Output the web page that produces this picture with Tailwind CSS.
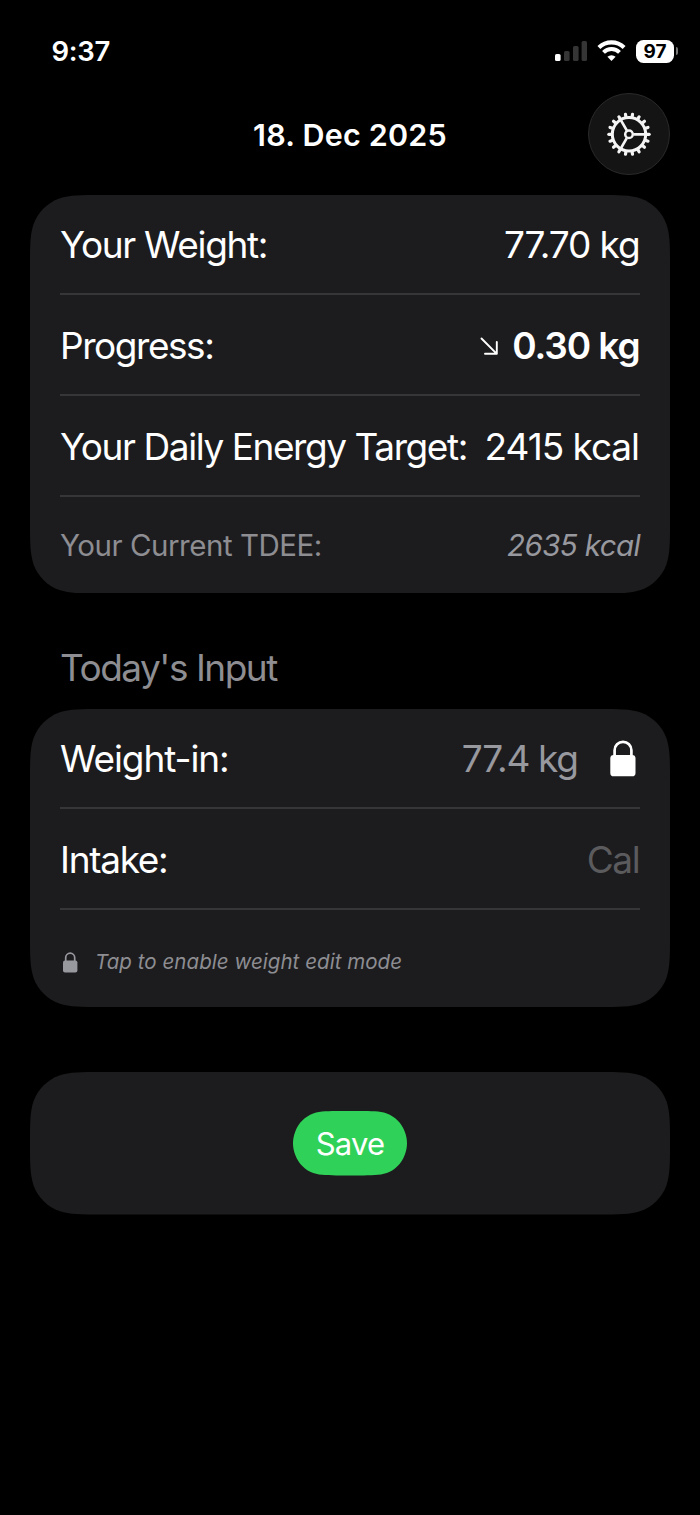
<!DOCTYPE html>
<html lang="en">
<head>
<meta charset="utf-8">
<title>Daily Weight</title>
<script src="https://cdn.jsdelivr.net/npm/@tailwindcss/browser@4"></script>
</head>
<body class="bg-black">
<main class="w-[700px] h-[1515px] bg-black text-white font-['Inter',sans-serif] overflow-hidden flex flex-col whitespace-nowrap">

  <!-- Status bar -->
  <header class="h-[93px] shrink-0 pl-[51.5px] pr-[22px] pt-[34px] flex items-start justify-between">
    <div class="h-[36px] flex items-center text-[27.5px] font-semibold"><span class="tracking-[-0.3px]">9:37</span></div>
    <div class="h-[34px] flex items-center">
      <svg width="32" height="20" viewBox="0 0 32 20" class="mr-[10px]">
        <rect x="0" y="13" width="5.6" height="7" rx="1.6" fill="#fff"/>
        <rect x="9" y="10" width="5.6" height="10" rx="1.6" fill="#353535"/>
        <rect x="18" y="5" width="5.6" height="15" rx="1.6" fill="#353535"/>
        <rect x="26.6" y="0" width="5.4" height="20" rx="1.6" fill="#353535"/>
      </svg>
      <svg width="29" height="21" viewBox="0 0 29 21" class="mr-[10px] mb-[1px]" fill="none" stroke="#fff">
        <path d="M1.9 7.5a18.2 18.2 0 0 1 25.2 0" stroke-width="4.2"/>
        <path d="M6.5 12.4a11.3 11.3 0 0 1 16 0" stroke-width="4"/>
        <path d="M14.5 21l-4.1-4.2a6 6 0 0 1 8.2 0z" fill="#fff" stroke="none"/>
      </svg>
      <div class="w-[38px] h-[23px] rounded-[7.5px] bg-white text-black flex items-center justify-center text-[19px] font-bold leading-none tracking-[0.1px]">97</div>
      <div class="w-[2.5px] h-[8px] ml-[1.5px] rounded-r-full bg-[#777]"></div>
    </div>
  </header>

  <!-- Title bar -->
  <div class="h-[101.5px] shrink-0 pl-[30px] pr-[30px] grid grid-cols-[82px_1fr_82px] items-start">
    <span></span>
    <h1 class="h-[84px] flex items-center justify-center text-[30.5px] font-semibold"><span class="tracking-[0.2px]">18. Dec 2025</span></h1>
    <button class="size-[82px] rounded-full bg-[#141414] border-[1.5px] border-[#2a2a2a] flex items-center justify-center">
      <svg width="46" height="46" viewBox="-23 -23.3 46 46" fill="none" stroke="#f4f4f4">
        <circle r="16.7" stroke-width="3"/>
        <circle r="3.8" stroke-width="2.5"/>
        <path d="M4.5 0H16M-2.25 -3.9L-8 -13.86M-2.25 3.9L-8 13.86" stroke-width="2.7"/>
        <g id="teeth" stroke-width="3.2" stroke-linecap="round">
          <path id="tooth" d="M17.5 0H20.2"/>
          <use href="#tooth" transform="rotate(20)"/>
          <use href="#tooth" transform="rotate(40)"/>
          <use href="#tooth" transform="rotate(60)"/>
          <use href="#tooth" transform="rotate(80)"/>
          <use href="#tooth" transform="rotate(100)"/>
        </g>
        <use href="#teeth" transform="rotate(120)"/>
        <use href="#teeth" transform="rotate(240)"/>
      </svg>
    </button>
  </div>

  <!-- Summary card -->
  <section class="relative isolate mx-[30px] h-[398.5px] shrink-0 px-[30px] flex flex-col text-[37px]">
    <svg class="absolute inset-0 -z-10" width="640" height="398.5" viewBox="0 0 640 398.5" fill="#1c1c1e"><path d="M70.9 0H569.1C589.5 0 599.7 0 610.7 3.5C622.7 7.8 632.2 17.3 636.5 29.3C640 40.3 640 50.5 640 70.9V327.6C640 348 640 358.2 636.5 369.2C632.2 381.2 622.7 390.7 610.7 395C599.7 398.5 589.5 398.5 569.1 398.5H70.9C50.5 398.5 40.3 398.5 29.3 395C17.3 390.7 7.8 381.2 3.5 369.2C0 358.2 0 348 0 327.6V70.9C0 50.5 0 40.3 3.5 29.3C7.8 17.3 17.3 7.8 29.3 3.5C40.3 0 50.5 0 70.9 0Z"/></svg>
    <div class="h-[98.5px] pt-[2px] flex items-center justify-between"><span class="tracking-[-1.33px]">Your Weight:</span><span class="mr-[0.5px] tracking-[-1.1px]">77.70 kg</span></div>
    <hr class="h-[2px] border-0 bg-[#363638] shrink-0">
    <div class="h-[99px] pt-[2px] flex items-center justify-between"><span class="tracking-[-1.45px]">Progress:</span>
      <span class="flex items-center"><svg class="mr-[13px]" width="20" height="20" viewBox="0 0 20 20" fill="none" stroke="#fff" stroke-width="1.9" stroke-linecap="round" stroke-linejoin="round"><path d="M2.5 2.5L17.8 17.8M17.8 6V17.8H6"/></svg><span class="mr-[0.5px] font-semibold tracking-[-1.1px]">0.30 kg</span></span></div>
    <hr class="h-[2px] border-0 bg-[#363638] shrink-0">
    <div class="h-[99px] pt-[2px] flex items-center justify-between"><span class="tracking-[-1.43px]">Your Daily Energy Target:</span><span class="mr-[1px] tracking-[-1.05px]">2415 kcal</span></div>
    <hr class="h-[2px] border-0 bg-[#363638] shrink-0">
    <div class="h-[96px] flex items-center justify-between text-[29.5px] text-[#8d8d92]"><span class="tracking-[-0.47px]">Your Current TDEE:</span><span class="italic tracking-[-0.6px] text-[#98989f]">2635 kcal</span></div>
  </section>

  <h2 class="h-[115.5px] shrink-0 pl-[60px] pt-[52px] text-[37px] leading-[46px] text-[#8d8d92]"><span class="tracking-[-1.5px]">Today's Input</span></h2>

  <!-- Input card -->
  <section class="relative isolate mx-[30px] h-[298px] shrink-0 px-[30px] flex flex-col text-[37px]">
    <svg class="absolute inset-0 -z-10" width="640" height="298" viewBox="0 0 640 298" fill="#1c1c1e"><path d="M70.9 0H569.1C589.5 0 599.7 0 610.7 3.5C622.7 7.8 632.2 17.3 636.5 29.3C640 40.3 640 50.5 640 70.9V227.1C640 247.5 640 257.7 636.5 268.7C632.2 280.7 622.7 290.2 610.7 294.5C599.7 298 589.5 298 569.1 298H70.9C50.5 298 40.3 298 29.3 294.5C17.3 290.2 7.8 280.7 3.5 268.7C0 257.7 0 247.5 0 227.1V70.9C0 50.5 0 40.3 3.5 29.3C7.8 17.3 17.3 7.8 29.3 3.5C40.3 0 50.5 0 70.9 0Z"/></svg>
    <div class="h-[98.5px] pt-[2px] flex items-center justify-between"><span class="tracking-[-1.1px]">Weight-in:</span>
      <span class="flex items-center"><span class="text-[#98989f] tracking-[-1.35px]">77.4 kg</span>
        <svg class="ml-[32.5px] mr-[3px]" width="27" height="37" viewBox="0 0 27 37"><path d="M4.6 17V10.2a8.4 8.4 0 0 1 16.8 0V17" fill="none" stroke="#fff" stroke-width="2.7"/><rect x=".3" y="15" width="25.2" height="21.3" rx="3.4" fill="#fff"/></svg></span></div>
    <hr class="h-[2px] border-0 bg-[#363638] shrink-0">
    <div class="h-[99px] pt-[2px] flex items-center justify-between"><span class="tracking-[-1.3px]">Intake:</span><span class="mr-[0.5px] text-[#5b5b5e] tracking-[-1.3px]">Cal</span></div>
    <hr class="h-[2px] border-0 bg-[#363638] shrink-0">
    <div class="h-[96.5px] pl-[2.5px] pt-[9px] flex items-center text-[20.5px] text-[#98989f]">
      <svg class="mr-[17.5px]" width="15" height="21" viewBox="0 0 15 21"><path d="M2.7 10V5.7a4.5 4.5 0 0 1 9 0V10" fill="none" stroke="#98989f" stroke-width="1.7"/><rect x="0" y="8.4" width="14.4" height="12" rx="2" fill="#98989f"/></svg>
      <span class="italic tracking-[0.05px] text-[#8d8d92]">Tap to enable weight edit mode</span></div>
  </section>

  <!-- Save card -->
  <section class="relative isolate mx-[30px] mt-[65.5px] h-[142.5px] shrink-0 flex items-center justify-center">
    <svg class="absolute inset-0 -z-10" width="640" height="142.5" viewBox="0 0 640 142.5" fill="#1c1c1e"><path d="M70.9 0H569.1C589.5 0 599.7 0 610.7 3.5C622.7 7.8 632.2 17.3 636.5 29.3C640 40.3 640 50.5 640 70.9V71.6C640 92 640 102.2 636.5 113.2C632.2 125.2 622.7 134.7 610.7 139C599.7 142.5 589.5 142.5 569.1 142.5H70.9C50.5 142.5 40.3 142.5 29.3 139C17.3 134.7 7.8 125.2 3.5 113.2C0 102.2 0 92 0 71.6V70.9C0 50.5 0 40.3 3.5 29.3C7.8 17.3 17.3 7.8 29.3 3.5C40.3 0 50.5 0 70.9 0Z"/></svg>
    <button class="relative isolate w-[114px] h-[64.5px] pt-[1.5px] flex items-center justify-center text-[31px]">
      <svg class="absolute inset-0 -z-10" width="114" height="64.5" viewBox="0 0 114 64.5" fill="#30d158"><path d="M48 0H66C79 0 86 0 93.8 2.4C102 5.4 108.6 12 111.6 20.2C113.2 24.5 114 28 114 32.25C114 36.5 113.2 40 111.6 44.3C108.6 52.5 102 59.1 93.8 62.1C86 64.5 79 64.5 66 64.5H48C35 64.5 28 64.5 20.2 62.1C12 59.1 5.4 52.5 2.4 44.3C.8 40 0 36.5 0 32.25C0 28 .8 24.5 2.4 20.2C5.4 12 12 5.4 20.2 2.4C28 0 35 0 48 0Z"/></svg>
      <span class="tracking-[-0.8px]">Save</span>
    </button>
  </section>
</main>
</body>
</html>
